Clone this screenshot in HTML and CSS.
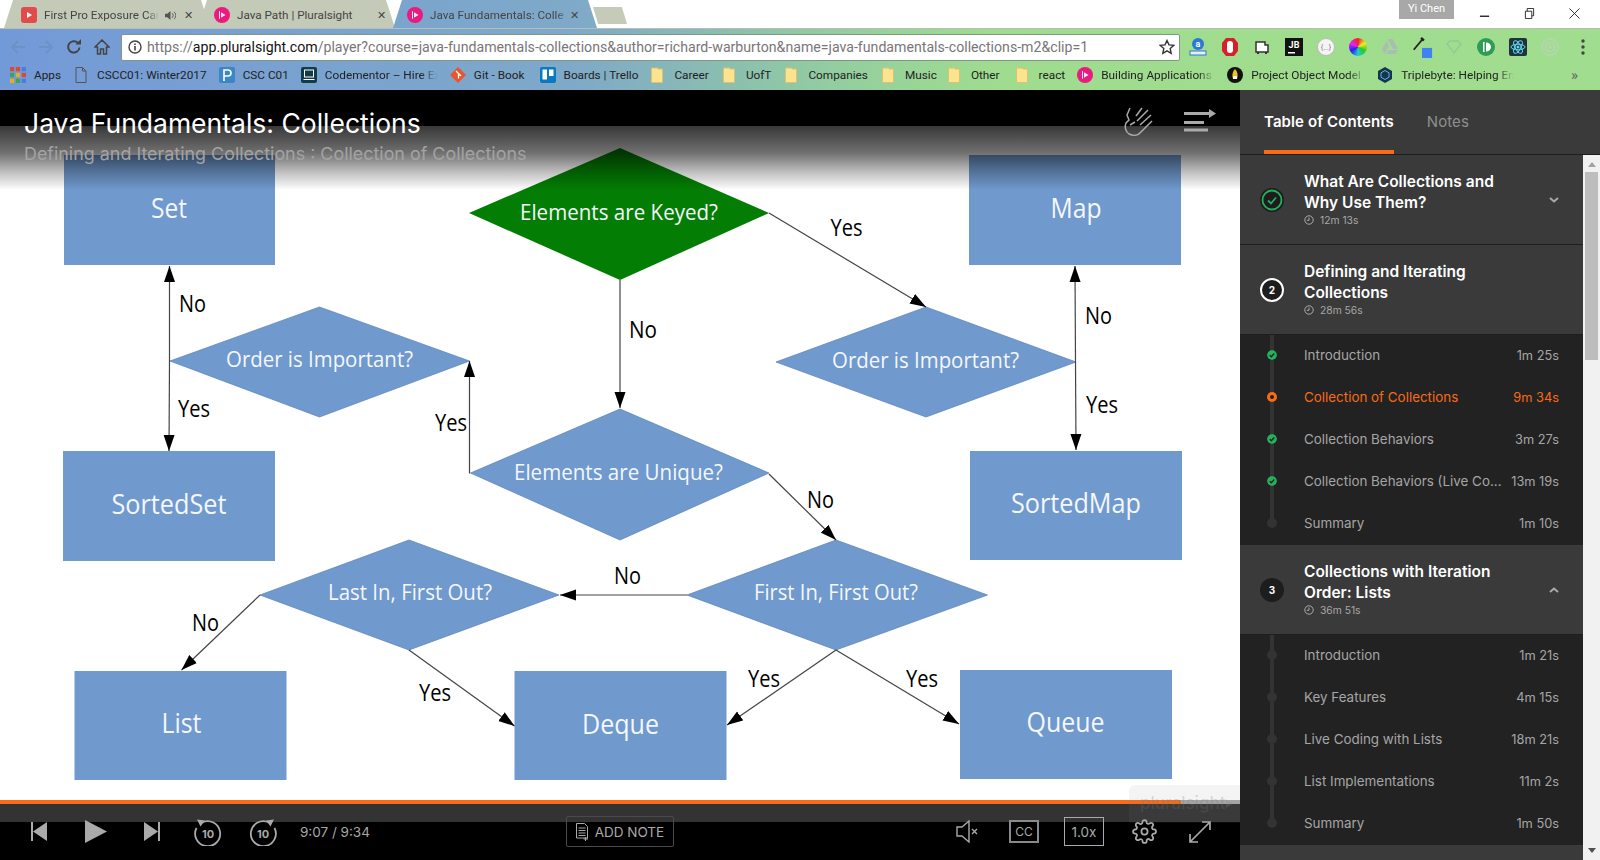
FILE: index.html
```html
<!DOCTYPE html>
<html>
  <head>
    <meta charset="utf-8">
    <link rel="stylesheet" href="styles.css">
    <title>Java Fundamentals: Collections</title>
  </head>
  <body>
    <svg class="defs" width="0" height="0">
      <defs>
        <symbol id="ps" viewBox="0 0 16 16">
          <circle cx="8" cy="8" r="8" fill="#ea1a7f"/>
          <path d="M5 4v8l1-.6V4.600zM7 5.200v5.600l4.500-2.800z" fill="#fff" opacity=".9"/>
        </symbol>
        <symbol id="folder" viewBox="0 0 12 16">
          <path d="M.5 1h6.500v1h4.500v13.500H.5z" fill="#fbe38f" stroke="#d9c36e"/>
        </symbol>
        <symbol id="clock" viewBox="0 0 10 10">
          <circle cx="5" cy="5" r="4.200" fill="none" stroke="#aaa"/>
          <path d="M5 2.500V5.300H2.800" fill="none" stroke="#aaa"/>
        </symbol>
        <symbol id="done" viewBox="0 0 10 10">
          <circle cx="5" cy="5" r="5" fill="#23b15d"/>
          <path d="M2.700 5.200l1.600 1.600 3-3.300" fill="none" stroke="#222" stroke-width="1.300"/>
        </symbol>
        <marker id="head" markerUnits="userSpaceOnUse" markerWidth="17" markerHeight="12" refX="16" refY="6" orient="auto">
          <path d="M0 .5L16 6 0 11.500z" fill="#000"/>
        </marker>
      </defs>
    </svg>

    <div class="browser">
      <div class="tabstrip">
        <div class="tab">
          <svg class="favicon" viewBox="0 0 16 16"><rect width="16" height="16" rx="3" fill="#e34a4a"/><path d="M6 5v6l5-3z" fill="#fff"/></svg>
          <span class="tab-title tab-title-short">First Pro Exposure Car</span>
          <svg class="tab-sound" viewBox="0 0 12 12"><path d="M0 4h2.500L6 1v10L2.500 8H0z" fill="#555"/><path d="M8 3.500a4 4 0 0 1 0 5M10 2a6 6 0 0 1 0 8" fill="none" stroke="#555"/></svg>
          <span class="tab-close">✕</span>
        </div>
        <div class="tab tab-second">
          <svg class="favicon"><use href="#ps"/></svg>
          <span class="tab-title">Java Path | Pluralsight</span>
          <span class="tab-close">✕</span>
        </div>
        <div class="tab tab-active">
          <svg class="favicon"><use href="#ps"/></svg>
          <span class="tab-title tab-title-short">Java Fundamentals: Colle</span>
          <span class="tab-close">✕</span>
        </div>
        <div class="newtab"></div>
        <div class="user">Yi Chen</div>
        <div class="winbtns">
          <svg viewBox="0 0 12 12"><path d="M1 9h10" stroke="#222" stroke-width="1.500"/></svg>
          <svg viewBox="0 0 12 12"><path d="M1.500 3.500h7v8h-7zM3.500 3.500V.5h7v8h-2" fill="none" stroke="#222"/></svg>
          <svg viewBox="0 0 12 12"><path d="M.5.5l11 11M11.500.5l-11 11" stroke="#222"/></svg>
        </div>
      </div>

      <div class="toolbar">
        <svg class="nav nav-off" viewBox="0 0 16 16"><path d="M15 8H2M8 2L2 8l6 6" fill="none" stroke="#6f90c4" stroke-width="2"/></svg>
        <svg class="nav nav-off" viewBox="0 0 16 16"><path d="M1 8h13M8 2l6 6-6 6" fill="none" stroke="#6f90c4" stroke-width="2"/></svg>
        <svg class="nav" viewBox="0 0 16 16"><path d="M13.500 8.500A5.700 5.700 0 1 1 12 4" fill="none" stroke="#444" stroke-width="2"/><path d="M9.500 5.500H15V0z" fill="#444"/></svg>
        <svg class="nav" viewBox="0 0 16 16"><path d="M8 1L1 8h2.500v7h3V10h3v5h3V8H15z" fill="none" stroke="#444" stroke-width="1.500"/></svg>
        <div class="omnibox">
          <svg class="info" viewBox="0 0 14 14"><circle cx="7" cy="7" r="6" fill="none" stroke="#444" stroke-width="1.400"/><path d="M6.200 6h1.600v4.500H6.200zM6.200 3.400h1.600V5H6.200z" fill="#444"/></svg>
          <span class="url"><span class="url-muted">https://</span>app.pluralsight.com<span class="url-muted">/player?course=java-fundamentals-collections&amp;author=richard-warburton&amp;name=java-fundamentals-collections-m2&amp;clip=1</span></span>
          <svg class="star" viewBox="0 0 16 16"><path d="M8 1.500l2 4.400 4.800.5-3.600 3.200 1 4.700L8 11.900l-4.200 2.400 1-4.700L1.200 6.400 6 5.900z" fill="none" stroke="#333" stroke-width="1.400"/></svg>
        </div>
        <div class="extensions">
          <svg viewBox="0 0 18 18"><circle cx="9" cy="6" r="6" fill="#2a78d8"/><text x="9" y="9" class="ext-a">a</text><rect x="1" y="13" width="16" height="4" fill="#e8eef0" stroke="#2a78d8"/></svg>
          <svg viewBox="0 0 18 18"><path d="M5 0h8l4 5v8l-4 5H5l-4-5V5z" fill="#d8202a"/><rect x="6" y="3" width="6" height="12" rx="3" fill="#fff"/></svg>
          <svg viewBox="0 0 18 18"><path d="M3 4h9v3h3v7H3z" fill="#fff" stroke="#333" stroke-width="1.500"/><path d="M5 14v2M13 14v2" stroke="#333" stroke-width="2"/></svg>
          <svg viewBox="0 0 18 18"><rect width="18" height="18" fill="#111"/><text x="9" y="10" class="ext-jb">JB</text><rect x="3" y="14" width="7" height="1.500" fill="#fff"/></svg>
          <svg viewBox="0 0 18 18"><circle cx="9" cy="9" r="8.500" fill="#f4f4f4" stroke="#bbb"/><text x="9" y="12" class="ext-dots">{...}</text></svg>
          <div class="ext-wheel"></div>
          <svg viewBox="0 0 18 18"><path d="M6.500 1h5L17 11h-5zM5.500 3L1 11l2.500 5 4.500-8zM5 16l2.500-4H17l-2.500 4z" fill="#a9bdb0"/></svg>
          <svg class="ext-drop" viewBox="0 0 24 24"><path d="M3 15L13 3" stroke="#222" stroke-width="2"/><path d="M12 1l3 3-2 2-3-3z" fill="#222"/><rect x="12" y="13" width="11" height="11" fill="#3f82f0"/></svg>
          <svg viewBox="0 0 18 18"><path d="M2 6l3-3h8l3 3-7 9z" fill="none" stroke="#93c996" stroke-width="1.300"/></svg>
          <svg viewBox="0 0 18 18"><circle cx="9" cy="9" r="9" fill="#2f9c55"/><path d="M6 4h1.500v10H6zM9 4.500a5 4.500 0 0 1 0 9z" fill="#fff"/></svg>
          <svg viewBox="0 0 18 18"><rect width="18" height="18" rx="2" fill="#20323a"/><g fill="none" stroke="#61d5f5"><ellipse cx="9" cy="9" rx="7" ry="2.800"/><ellipse cx="9" cy="9" rx="7" ry="2.800" transform="rotate(60 9 9)"/><ellipse cx="9" cy="9" rx="7" ry="2.800" transform="rotate(120 9 9)"/></g><circle cx="9" cy="9" r="1.500" fill="#61d5f5"/></svg>
          <svg viewBox="0 0 18 18"><g fill="none" stroke="#b9d4b4" stroke-width="1.500"><circle cx="9" cy="9" r="8"/><circle cx="9" cy="9" r="4.500"/></g><circle cx="9" cy="9" r="1.500" fill="#b9d4b4"/></svg>
          <svg class="ext-menu" viewBox="0 0 4 16"><circle cx="2" cy="2" r="1.700" fill="#444"/><circle cx="2" cy="8" r="1.700" fill="#444"/><circle cx="2" cy="14" r="1.700" fill="#444"/></svg>
        </div>
      </div>

      <div class="bookmarks">
        <div class="bm bm-apps">
          <svg class="bm-icon" viewBox="0 0 15 15"><g fill="#d84a38"><rect width="4" height="4"/><rect x="5.500" width="4" height="4"/></g><rect x="11" width="4" height="4" fill="#4a7de0"/><rect y="5.500" width="4" height="4" fill="#3aa655"/><rect x="5.500" y="5.500" width="4" height="4" fill="#e0b020"/><rect x="11" y="5.500" width="4" height="4" fill="#d84a38"/><rect y="11" width="4" height="4" fill="#e0b020"/><rect x="5.500" y="11" width="4" height="4" fill="#3aa655"/><rect x="11" y="11" width="4" height="4" fill="#4a7de0"/></svg>
          <span>Apps</span>
        </div>
        <div class="bm bm-doc">
          <svg class="bm-icon" viewBox="0 0 12 16"><path d="M1 .5h6.500L11 4v11.500H1z" fill="none" stroke="#555"/><path d="M7.500.5V4H11" fill="none" stroke="#555"/></svg>
          <span>CSCC01: Winter2017</span>
        </div>
        <div class="bm bm-csc">
          <svg class="bm-icon" viewBox="0 0 16 16"><rect width="16" height="16" rx="2" fill="#3b86c6"/><path d="M5 14V3h4a3 3 0 0 1 0 6H5" fill="none" stroke="#fff" stroke-width="1.600"/></svg>
          <span>CSC C01</span>
        </div>
        <div class="bm bm-code">
          <svg class="bm-icon" viewBox="0 0 16 16"><rect width="16" height="16" rx="2" fill="#123b4a"/><rect x="3.500" y="3" width="9" height="7" fill="none" stroke="#fff"/><path d="M2.500 12.500h11" stroke="#fff"/></svg>
          <span class="bm-fade">Codementor – Hire Ex</span>
        </div>
        <div class="bm bm-git">
          <svg class="bm-icon" viewBox="0 0 16 16"><path d="M8 0l8 8-8 8-8-8z" fill="#e8552d"/><path d="M6 4l2.500 2.500v5M8.500 6.500l2.500 2.500" stroke="#fff" stroke-width="1.300" fill="none"/></svg>
          <span>Git - Book</span>
        </div>
        <div class="bm bm-trello">
          <svg class="bm-icon" viewBox="0 0 16 16"><rect width="16" height="16" rx="2" fill="#0a79bf"/><rect x="2.500" y="2.500" width="4.500" height="10" fill="#fff"/><rect x="9" y="2.500" width="4.500" height="6.500" fill="#fff"/></svg>
          <span>Boards | Trello</span>
        </div>
        <div class="bm bm-folder"><svg class="bm-icon bm-folder-icon"><use href="#folder"/></svg><span>Career</span></div>
        <div class="bm bm-folder"><svg class="bm-icon bm-folder-icon"><use href="#folder"/></svg><span>UofT</span></div>
        <div class="bm bm-folder"><svg class="bm-icon bm-folder-icon"><use href="#folder"/></svg><span>Companies</span></div>
        <div class="bm bm-folder bm-music"><svg class="bm-icon bm-folder-icon"><use href="#folder"/></svg><span>Music</span></div>
        <div class="bm bm-folder bm-other"><svg class="bm-icon bm-folder-icon"><use href="#folder"/></svg><span>Other</span></div>
        <div class="bm bm-folder bm-react"><svg class="bm-icon bm-folder-icon"><use href="#folder"/></svg><span>react</span></div>
        <div class="bm bm-ps">
          <svg class="bm-icon"><use href="#ps"/></svg>
          <span class="bm-fade">Building Applications</span>
        </div>
        <div class="bm bm-maven">
          <svg class="bm-icon" viewBox="0 0 16 16"><circle cx="8" cy="8" r="8" fill="#111"/><path d="M8 2c3 3 3 7 2 10H6C5 9 5 5 8 2z" fill="#f2c21a"/><path d="M6 9h4v3H6z" fill="#fff"/></svg>
          <span class="bm-fade">Project Object Model</span>
        </div>
        <div class="bm bm-triple">
          <svg class="bm-icon" viewBox="0 0 16 16"><path d="M8 0l7 4v8l-7 4-7-4V4z" fill="#163450"/><path d="M8 3.500l4 2.300v4.400l-4 2.300-4-2.300V5.800z" fill="none" stroke="#5fb5d8"/></svg>
          <span class="bm-fade">Triplebyte: Helping En</span>
        </div>
        <div class="bm-more">»</div>
      </div>
    </div>

    <div class="app">
      <div class="player">
        <div class="player-top"></div>
        <div class="video">
          <svg class="slide" viewBox="0 126 1240 674" width="1240" height="674">
            <g class="boxes">
              <rect x="64" y="155" width="211" height="110"/>
              <rect x="969" y="155" width="212" height="110"/>
              <rect x="63" y="451" width="212" height="110"/>
              <rect x="970" y="451" width="212" height="109"/>
              <rect x="74.500" y="671" width="212" height="109"/>
              <rect x="514.500" y="671" width="212" height="109"/>
              <rect x="960" y="670" width="212" height="109"/>
            </g>
            <polygon class="keyed" points="469,213 620,148 769,213 620,280"/>
            <g class="boxes diamonds">
              <polygon points="170,361 319.500,307 469.500,361 319.500,417"/>
              <polygon points="776,362 926,307 1076,362 926,417"/>
              <polygon points="470.500,473 620,409 769,473 620,540"/>
              <polygon points="260,595 409,540 559,595 409,650"/>
              <polygon points="687,595 836,540 987.500,595 836,650"/>
            </g>

            <g class="arrows">
              <line x1="169.500" y1="361" x2="169.500" y2="266" marker-end="url(#head)"/>
              <line x1="169.500" y1="361" x2="169" y2="451" marker-end="url(#head)"/>
              <path d="M470 473H469.500V361" marker-end="url(#head)"/>
              <line x1="620" y1="280" x2="620" y2="408" marker-end="url(#head)"/>
              <line x1="769" y1="213" x2="926" y2="307" marker-end="url(#head)"/>
              <line x1="1075.500" y1="362" x2="1075" y2="266" marker-end="url(#head)"/>
              <line x1="1075.500" y1="362" x2="1076" y2="450" marker-end="url(#head)"/>
              <line x1="769" y1="474" x2="836" y2="540" marker-end="url(#head)"/>
              <line x1="687" y1="595" x2="560" y2="595" marker-end="url(#head)"/>
              <line x1="260" y1="595" x2="181.500" y2="670" marker-end="url(#head)"/>
              <line x1="409" y1="650" x2="514.500" y2="726" marker-end="url(#head)"/>
              <line x1="836" y1="650" x2="727" y2="725" marker-end="url(#head)"/>
              <line x1="836" y1="650" x2="959" y2="724" marker-end="url(#head)"/>
            </g>

            <g class="box-text">
              <text x="151" y="218" textLength="36" lengthAdjust="spacingAndGlyphs">Set</text>
              <text x="1050.500" y="218" textLength="51" lengthAdjust="spacingAndGlyphs">Map</text>
              <text x="111.500" y="514" textLength="115" lengthAdjust="spacingAndGlyphs">SortedSet</text>
              <text x="1011" y="513" textLength="130" lengthAdjust="spacingAndGlyphs">SortedMap</text>
              <text x="161.500" y="733" textLength="40" lengthAdjust="spacingAndGlyphs">List</text>
              <text x="582" y="734" textLength="77" lengthAdjust="spacingAndGlyphs">Deque</text>
              <text x="1026.500" y="732" textLength="78" lengthAdjust="spacingAndGlyphs">Queue</text>
            </g>
            <g class="diamond-text">
              <text x="520" y="220" textLength="198" lengthAdjust="spacingAndGlyphs">Elements are Keyed?</text>
              <text x="226" y="367" textLength="187" lengthAdjust="spacingAndGlyphs">Order is Important?</text>
              <text x="832" y="368" textLength="187" lengthAdjust="spacingAndGlyphs">Order is Important?</text>
              <text x="514" y="480" textLength="209" lengthAdjust="spacingAndGlyphs">Elements are Unique?</text>
              <text x="328" y="600" textLength="164" lengthAdjust="spacingAndGlyphs">Last In, First Out?</text>
              <text x="754" y="600" textLength="164" lengthAdjust="spacingAndGlyphs">First In, First Out?</text>
            </g>
            <g class="edge-text">
              <text x="179" y="312" textLength="27" lengthAdjust="spacingAndGlyphs">No</text>
              <text x="178" y="417" textLength="32" lengthAdjust="spacingAndGlyphs">Yes</text>
              <text x="435" y="431" textLength="32" lengthAdjust="spacingAndGlyphs">Yes</text>
              <text x="629" y="338" textLength="28" lengthAdjust="spacingAndGlyphs">No</text>
              <text x="830.500" y="236" textLength="32" lengthAdjust="spacingAndGlyphs">Yes</text>
              <text x="1085" y="324" textLength="27" lengthAdjust="spacingAndGlyphs">No</text>
              <text x="1086" y="413" textLength="32" lengthAdjust="spacingAndGlyphs">Yes</text>
              <text x="807" y="508" textLength="27" lengthAdjust="spacingAndGlyphs">No</text>
              <text x="614" y="584" textLength="27" lengthAdjust="spacingAndGlyphs">No</text>
              <text x="192" y="631" textLength="27" lengthAdjust="spacingAndGlyphs">No</text>
              <text x="419" y="701" textLength="32" lengthAdjust="spacingAndGlyphs">Yes</text>
              <text x="748" y="687" textLength="32" lengthAdjust="spacingAndGlyphs">Yes</text>
              <text x="906" y="687" textLength="32" lengthAdjust="spacingAndGlyphs">Yes</text>
            </g>
          </svg>
          <div class="video-shade"></div>
        </div>

        <div class="player-head">
          <div>
            <h1 class="course-title">Java Fundamentals: Collections</h1>
            <div class="course-sub">Defining and Iterating Collections : Collection of Collections</div>
          </div>
          <div class="head-icons">
            <svg class="wave" viewBox="0 0 30 30"><path d="M7 1L4 8l2 5-3 3c-2 4 0 9 3 11 4 2 9 2 12-2L29 14M13 9l6-8M14 14L25 3M17 18L28 8M12 15l-5 3" fill="none" stroke="#aaa" stroke-width="1.500"/></svg>
            <svg class="panel-toggle" viewBox="0 0 32 23"><path d="M0 4.500h26M0 13.500h20M0 21h24" stroke="#aaa" stroke-width="3"/><path d="M25 0l7 4.500-7 4.500z" fill="#aaa"/></svg>
          </div>
        </div>

        <div class="watermark">
          <span>pluralsight</span>
          <svg viewBox="0 0 8 10"><path d="M0 0l8 5-8 5z" fill="#8a8a8a" opacity=".25"/></svg>
        </div>

        <div class="progress"><div class="progress-fill"></div></div>
        <div class="controls">
          <svg class="ctl ctl-prev" viewBox="0 0 16 19"><path d="M0 0h2v19H0zM16 0L2 9.500 16 19z" fill="#aaa"/></svg>
          <svg class="ctl ctl-play" viewBox="0 0 22 23"><path d="M0 0l22 11.500L0 23z" fill="#aaa"/></svg>
          <svg class="ctl ctl-next" viewBox="0 0 16 19"><path d="M0 0l14 9.500L0 19zM14 0h2v19h-2z" fill="#aaa"/></svg>
          <svg class="ctl ctl-skip ctl-back" viewBox="0 0 28 28">
            <path d="M8 4.500A12.500 12.500 0 1 1 2.500 10" fill="none" stroke="#aaa" stroke-width="1.800"/>
            <path d="M3 1.500l8 1-4.500 6z" fill="#aaa"/>
            <text x="14" y="20" class="skip-num">10</text>
          </svg>
          <svg class="ctl ctl-skip ctl-fwd" viewBox="0 0 28 28">
            <path d="M20 4.500A12.500 12.500 0 1 0 25.500 10" fill="none" stroke="#aaa" stroke-width="1.800"/>
            <path d="M25 1.500l-8 1 4.500 6z" fill="#aaa"/>
            <text x="14" y="20" class="skip-num">10</text>
          </svg>
          <span class="time">9:07 / 9:34</span>
          <div class="add-note">
            <svg viewBox="0 0 13 18"><path d="M.5.5h8l3 3V15H.5z" fill="none" stroke="#aaa"/><path d="M2.500 5h7M2.500 7.500h7M2.500 10h7M2.500 12.500h7" stroke="#aaa"/><path d="M9.500 14v4M7.500 16h4.500" stroke="#aaa"/></svg>
            <span>ADD NOTE</span>
          </div>
          <svg class="ctl ctl-mute" viewBox="0 0 22 23"><path d="M1 7h5l7-6v21l-7-6H1z" fill="none" stroke="#aaa" stroke-width="1.400"/><path d="M16 9l5 5M21 9l-5 5" stroke="#aaa" stroke-width="1.400"/></svg>
          <div class="ctl-box ctl-cc">CC</div>
          <div class="ctl-box ctl-speed">1.0x</div>
          <svg class="ctl ctl-gear" viewBox="0 0 24 24"><circle cx="12" cy="12" r="3" fill="none" stroke="#aaa" stroke-width="1.700"/><path d="M19.400 15a1.650 1.650 0 0 0 .33 1.820l.06.06a2 2 0 0 1 0 2.830 2 2 0 0 1-2.830 0l-.06-.06a1.650 1.650 0 0 0-1.820-.33 1.650 1.650 0 0 0-1 1.510V21a2 2 0 0 1-2 2 2 2 0 0 1-2-2v-.09A1.650 1.650 0 0 0 9 19.400a1.650 1.650 0 0 0-1.820.33l-.06.06a2 2 0 0 1-2.830 0 2 2 0 0 1 0-2.830l.06-.06a1.650 1.650 0 0 0 .33-1.820 1.650 1.650 0 0 0-1.510-1H3a2 2 0 0 1-2-2 2 2 0 0 1 2-2h.09A1.650 1.650 0 0 0 4.600 9a1.650 1.650 0 0 0-.33-1.820l-.06-.06a2 2 0 0 1 0-2.830 2 2 0 0 1 2.830 0l.06.06a1.650 1.650 0 0 0 1.820.33H9a1.650 1.650 0 0 0 1-1.510V3a2 2 0 0 1 2-2 2 2 0 0 1 2 2v.09a1.650 1.650 0 0 0 1 1.510 1.650 1.650 0 0 0 1.820-.33l.06-.06a2 2 0 0 1 2.830 0 2 2 0 0 1 0 2.830l-.06.06a1.650 1.650 0 0 0-.33 1.820V9a1.650 1.650 0 0 0 1.510 1H21a2 2 0 0 1 2 2 2 2 0 0 1-2 2h-.09a1.650 1.650 0 0 0-1.510 1z" fill="none" stroke="#aaa" stroke-width="1.700"/></svg>
          <svg class="ctl ctl-expand" viewBox="0 0 22 22"><path d="M1 21L21 1M13 1h8v8M1 13v8h8" fill="none" stroke="#aaa" stroke-width="1.700"/></svg>
        </div>
      </div>

      <div class="sidebar">
        <div class="side-tabs">
          <div class="side-tab side-tab-on">Table of Contents</div>
          <div class="side-tab">Notes</div>
        </div>
        <div class="side-body">
          <div class="toc">
            <div class="module">
              <svg class="mod-badge" viewBox="0 0 24 24"><circle cx="12" cy="12" r="12" fill="#1d1d1d"/><circle cx="12" cy="12" r="9.500" fill="none" stroke="#23b15d" stroke-width="1.800"/><path d="M8 12.500l3 3 5-6" fill="none" stroke="#23b15d" stroke-width="1.800"/></svg>
              <div class="mod-text">
                <div class="mod-title">What Are Collections and Why Use Them?</div>
                <div class="mod-time"><svg><use href="#clock"/></svg>12m 13s</div>
              </div>
              <svg class="mod-chevron" viewBox="0 0 10 6"><path d="M1 1l4 3.500L9 1" fill="none" stroke="#aaa" stroke-width="2"/></svg>
            </div>

            <div class="module">
              <div class="mod-num mod-num-current">2</div>
              <div class="mod-text">
                <div class="mod-title">Defining and Iterating Collections</div>
                <div class="mod-time"><svg><use href="#clock"/></svg>28m 56s</div>
              </div>
            </div>
            <div class="clips">
              <div class="clip"><svg class="clip-dot"><use href="#done"/></svg><span class="clip-name">Introduction</span><span class="clip-time">1m 25s</span></div>
              <div class="clip clip-now"><span class="clip-dot clip-dot-now"></span><span class="clip-name">Collection of Collections</span><span class="clip-time">9m 34s</span></div>
              <div class="clip"><svg class="clip-dot"><use href="#done"/></svg><span class="clip-name">Collection Behaviors</span><span class="clip-time">3m 27s</span></div>
              <div class="clip"><svg class="clip-dot"><use href="#done"/></svg><span class="clip-name">Collection Behaviors (Live Co...</span><span class="clip-time">13m 19s</span></div>
              <div class="clip"><span class="clip-dot clip-dot-todo"></span><span class="clip-name">Summary</span><span class="clip-time">1m 10s</span></div>
            </div>

            <div class="module">
              <div class="mod-num">3</div>
              <div class="mod-text">
                <div class="mod-title">Collections with Iteration Order: Lists</div>
                <div class="mod-time"><svg><use href="#clock"/></svg>36m 51s</div>
              </div>
              <svg class="mod-chevron" viewBox="0 0 10 6"><path d="M1 5l4-3.500L9 5" fill="none" stroke="#aaa" stroke-width="2"/></svg>
            </div>
            <div class="clips">
              <div class="clip"><span class="clip-dot clip-dot-todo"></span><span class="clip-name">Introduction</span><span class="clip-time">1m 21s</span></div>
              <div class="clip"><span class="clip-dot clip-dot-todo"></span><span class="clip-name">Key Features</span><span class="clip-time">4m 15s</span></div>
              <div class="clip"><span class="clip-dot clip-dot-todo"></span><span class="clip-name">Live Coding with Lists</span><span class="clip-time">18m 21s</span></div>
              <div class="clip"><span class="clip-dot clip-dot-todo"></span><span class="clip-name">List Implementations</span><span class="clip-time">11m 2s</span></div>
              <div class="clip"><span class="clip-dot clip-dot-todo"></span><span class="clip-name">Summary</span><span class="clip-time">1m 50s</span></div>
            </div>
          </div>
          <div class="scrollbar">
            <div class="scroll-up"></div>
            <div class="scroll-track"><div class="scroll-thumb"></div></div>
            <div class="scroll-down"></div>
          </div>
        </div>
      </div>
    </div>
  </body>
</html>
```
FILE: styles.css
```css
/* Page frame: browser chrome on top, player and contents panel below */
html, body {
    margin: 0;
    padding: 0;
    height: 860px;
    overflow: hidden;
    background: #000;
    font-family: "Inter", "Liberation Sans", sans-serif;
}

.defs {
    position: absolute;
}

/* Browser chrome */
.browser {
    height: 90px;
    font-family: "Roboto", "Liberation Sans", sans-serif;
    --theme: linear-gradient(90deg, #739ad8 0%, #7fa9c8 36%, #93cda0 52%, #9fdc8f 62%, #a0dd8e 100%);
}

.tabstrip {
    height: 28px;
    background: #fff;
    display: flex;
    align-items: flex-end;
    padding-left: 4px;
    position: relative;
    border-bottom: 1px solid #b9bdb5;
}

.tab {
    width: 206px;
    height: 28px;
    margin-right: -12px;
    padding: 2px 17px 0 13px;
    box-sizing: border-box;
    display: flex;
    align-items: center;
    background: #c4cab8;
    clip-path: polygon(0 100%, 9px 0, calc(100% - 9px) 0, 100% 100%);
    font-size: 11.700px;
    color: #444;
}

.tab-second {
    width: 197px;
    margin-right: -2px;
    padding: 2px 9px 0 12px;
}

.tab-active {
    width: 204px;
    margin-right: -4px;
    padding: 2px 18px 0 10px;
    background: var(--theme);
    background-attachment: fixed;
    z-index: 1;
}

.favicon {
    width: 16px;
    height: 16px;
    margin: 0 7px 0 4px;
    flex: none;
}

.tab-title {
    flex: 1;
    white-space: nowrap;
    overflow: hidden;
}

.tab-title-short {
    -webkit-mask-image: linear-gradient(90deg, #000 90%, transparent);
    mask-image: linear-gradient(90deg, #000 90%, transparent);
}

.tab-sound {
    width: 11px;
    height: 11px;
    margin: 0 8px 0 6px;
}

.tab-close {
    font-size: 11px;
    color: #444;
}

.newtab {
    width: 34px;
    height: 17px;
    margin: 0 0 4px 0;
    background: #c5cbb8;
    clip-path: polygon(0 0, 85% 0, 100% 100%, 15% 100%);
}

.user {
    position: absolute;
    left: 1399px;
    top: 0;
    width: 55px;
    height: 19px;
    line-height: 18px;
    background: #a8a8a8;
    color: #fff;
    font-size: 11px;
    text-align: center;
}

.winbtns {
    position: absolute;
    left: 1479px;
    top: 8px;
    display: flex;
    gap: 34px;
}

.winbtns svg {
    width: 11px;
    height: 11px;
}

.toolbar {
    height: 36px;
    display: flex;
    align-items: center;
    background: var(--theme);
    background-attachment: fixed;
    padding-left: 10px;
}

.nav {
    width: 16px;
    height: 16px;
    margin-right: 12px;
    flex: none;
}

.nav-off {
    opacity: .9;
}

.omnibox {
    width: 1059px;
    height: 27px;
    margin-left: -1px;
    box-sizing: border-box;
    background: #fff;
    border: 1px solid #7d9a80;
    border-radius: 2px;
    display: flex;
    align-items: center;
    padding: 0 4px 0 6px;
    font-size: 14.150px;
    white-space: nowrap;
}

.info {
    width: 14px;
    height: 14px;
    margin-right: 5px;
    flex: none;
}

.url {
    flex: 1;
    color: #111;
}

.url-muted {
    color: #777;
}

.star {
    width: 16px;
    height: 16px;
}

.extensions {
    display: flex;
    align-items: center;
    gap: 14px;
    margin-left: 9px;
}

.extensions svg, .ext-wheel {
    width: 18px;
    height: 18px;
    flex: none;
}

.ext-wheel {
    border-radius: 50%;
    background: conic-gradient(#e22, #ee2 17%, #2c2 33%, #2cc 50%, #22e 67%, #e2e 83%, #e22);
}

.extensions .ext-drop {
    width: 22px;
    height: 22px;
    margin: 0 -2px;
}

.extensions .ext-menu {
    width: 4px;
    height: 16px;
    margin-left: 8px;
}

.ext-a {
    font-size: 9px;
    font-weight: bold;
    fill: #fff;
    text-anchor: middle;
}

.ext-jb {
    font-size: 9px;
    font-weight: bold;
    fill: #fff;
    text-anchor: middle;
}

.ext-dots {
    font-size: 7px;
    fill: #777;
    text-anchor: middle;
}

.bookmarks {
    height: 25px;
    box-sizing: border-box;
    padding: 0 0 5px 10px;
    display: flex;
    align-items: center;
    background: var(--theme);
    background-attachment: fixed;
    font-size: 11.800px;
    color: #222;
    white-space: nowrap;
    position: relative;
}

.bm {
    display: flex;
    align-items: center;
    gap: 8px;
    margin-right: 12px;
}

.bm-git {
    margin-right: 15px;
}

.bm-trello {
    margin-right: 13px;
}

.bm-icon {
    width: 16px;
    height: 16px;
    flex: none;
}

.bm-folder-icon {
    width: 12px;
}

.bm-folder {
    gap: 11px;
    margin-right: 14px;
}

.bm-folder.bm-music {
    margin-right: 11px;
}

.bm-folder.bm-other {
    margin-right: 16px;
}

.bm-folder.bm-react {
    margin-right: 12px;
}

.bm-fade {
    display: block;
    overflow: hidden;
    -webkit-mask-image: linear-gradient(90deg, #000 85%, transparent);
    mask-image: linear-gradient(90deg, #000 85%, transparent);
}

.bm-code .bm-fade {
    width: 113px;
}

.bm-ps .bm-fade {
    width: 114px;
}

.bm-maven .bm-fade {
    width: 114px;
}

.bm-triple .bm-fade {
    width: 113px;
}

.bm-more {
    margin-left: auto;
    margin-right: 22px;
    font-size: 15px;
    color: #666;
}

/* Player */
.app {
    display: flex;
    height: 770px;
}

.player {
    width: 1240px;
    display: flex;
    flex-direction: column;
    position: relative;
    background: #000;
}

.player-top {
    height: 36px;
}

.video {
    height: 674px;
    background: #fff;
    position: relative;
}

.slide {
    display: block;
    font-family: "Open Sans", "Liberation Sans", sans-serif;
}

.boxes {
    fill: #7099cd;
}

.diamonds {
    stroke: #5f88bd;
    stroke-width: .8;
}

.keyed {
    fill: #037d03;
}

.arrows {
    stroke: #444;
    stroke-width: 1.200;
    fill: none;
}

.box-text {
    fill: #f4f7fb;
    font-size: 28px;
}

.diamond-text {
    fill: #f4f7fb;
    font-size: 22px;
}

.edge-text {
    fill: #000;
    font-size: 23px;
}

.video-shade {
    position: absolute;
    left: 0;
    right: 0;
    top: 0;
    height: 64px;
    background: linear-gradient(rgba(0, 0, 0, .78), rgba(0, 0, 0, .56) 42%, rgba(0, 0, 0, .25) 72%, rgba(0, 0, 0, 0));
}

.player-head {
    position: absolute;
    left: 24px;
    right: 24px;
    top: 17px;
    display: flex;
    justify-content: space-between;
}

.course-title {
    margin: 0;
    font-size: 26.500px;
    font-weight: 400;
    line-height: 32px;
    color: #fff;
}

.course-sub {
    margin-top: 3px;
    font-size: 17.900px;
    line-height: 24px;
    color: #a3a3a3;
}

.head-icons {
    display: flex;
    gap: 31px;
    align-items: flex-start;
}

.wave {
    width: 30px;
    height: 30px;
}

.panel-toggle {
    width: 32px;
    height: 23px;
    margin-top: 2px;
}

.watermark {
    position: absolute;
    left: 1129px;
    top: 695px;
    width: 111px;
    height: 38px;
    padding-left: 11px;
    box-sizing: border-box;
    border-radius: 6px 0 0 0;
    background: rgba(128, 128, 128, .09);
    display: flex;
    align-items: flex-start;
    gap: 1px;
    font-size: 17px;
    line-height: 36px;
    font-weight: 500;
    color: rgba(120, 120, 120, .25);
    z-index: 2;
}

.watermark svg {
    width: 7px;
    height: 9px;
    margin-top: 14px;
}

.progress {
    height: 4px;
    background: #a9a9a9;
}

.progress-fill {
    width: 1181px;
    height: 100%;
    background: #f96b16;
}

.controls {
    height: 56px;
    box-sizing: border-box;
    display: flex;
    align-items: center;
    background: linear-gradient(#333 18px, #000 18px);
    padding: 0 0 1px 31px;
    color: #aaa;
}

.ctl {
    flex: none;
}

.ctl-prev, .ctl-next {
    width: 16px;
    height: 19px;
}

.ctl-play {
    width: 22px;
    height: 23px;
    margin-left: 38px;
}

.ctl-next {
    margin-left: 37px;
}

.ctl-skip {
    width: 28px;
    height: 28px;
}

.ctl-back {
    margin-left: 34px;
}

.ctl-fwd {
    margin-left: 27px;
}

.skip-num {
    font-size: 11px;
    font-weight: 700;
    fill: #aaa;
    text-anchor: middle;
}

.time {
    margin-left: 23px;
    font-size: 13.500px;
    color: #a8a8a8;
}

.add-note {
    width: 108px;
    height: 31px;
    margin-left: 196px;
    box-sizing: border-box;
    border: 1px solid #4a4a4a;
    border-radius: 2px;
    display: flex;
    align-items: center;
    justify-content: center;
    gap: 6px;
    font-size: 13.500px;
}

.add-note svg {
    width: 13px;
    height: 18px;
}

.ctl-mute {
    width: 22px;
    height: 23px;
    margin-left: 282px;
}

.ctl-box {
    box-sizing: border-box;
    border: 2px solid #8a8a8a;
    display: flex;
    align-items: center;
    justify-content: center;
    flex: none;
}

.ctl-cc {
    width: 30px;
    height: 23px;
    margin-left: 31px;
    font-size: 12px;
}

.ctl-speed {
    width: 40px;
    height: 29px;
    margin-left: 25px;
    border-width: 1px;
    border-color: #aaa;
    font-size: 13.500px;
}

.ctl-gear {
    width: 25px;
    height: 25px;
    margin-left: 28px;
}

.ctl-expand {
    width: 22px;
    height: 22px;
    margin-left: 32px;
}

/* Table of contents */
.sidebar {
    width: 360px;
    background: #3a3a3a;
    display: flex;
    flex-direction: column;
    color: #fff;
}

.side-tabs {
    height: 65px;
    box-sizing: border-box;
    border-bottom: 1px solid #1e1e1e;
    display: flex;
    gap: 33px;
    padding-left: 24px;
}

.side-tab {
    height: 64px;
    box-sizing: border-box;
    padding-top: 22px;
    font-size: 15px;
    letter-spacing: .1px;
    line-height: 20px;
    color: #8f8f8f;
}

.side-tab-on {
    color: #fff;
    font-weight: 600;
    border-bottom: 4px solid #f96b16;
}

.side-body {
    display: flex;
    height: 705px;
    overflow: hidden;
}

.toc {
    width: 343px;
    background: #3a3a3a;
}

.module {
    height: 90px;
    box-sizing: border-box;
    border-bottom: 1px solid #1e1e1e;
    display: flex;
    align-items: center;
    padding-left: 20px;
    position: relative;
}

.mod-badge, .mod-num {
    width: 24px;
    height: 24px;
    flex: none;
}

.mod-num {
    box-sizing: border-box;
    border-radius: 50%;
    background: #1d1d1d;
    font-size: 10px;
    font-weight: 700;
    line-height: 24px;
    text-align: center;
}

.mod-num-current {
    border: 2px solid #fff;
    line-height: 20px;
}

.mod-text {
    width: 215px;
    margin-left: 20px;
    padding-bottom: 2px;
}

.mod-title {
    font-size: 15.500px;
    font-weight: 600;
    line-height: 21px;
}

.mod-time {
    display: flex;
    align-items: center;
    gap: 6px;
    font-size: 10.300px;
    line-height: 14px;
    color: #a8a8a8;
}

.mod-time svg {
    width: 10px;
    height: 10px;
}

.mod-chevron {
    position: absolute;
    left: 309px;
    top: 42px;
    width: 10px;
    height: 6px;
}

.clips {
    height: 210px;
    background: #222;
    position: relative;
}

/* the vertical line that ties the clip dots together */
.clips::before {
    content: "";
    position: absolute;
    left: 30px;
    top: 0;
    bottom: 21px;
    width: 4px;
    background: #333;
}

.clip {
    height: 42px;
    box-sizing: border-box;
    display: flex;
    align-items: center;
    padding: 0 24px 2px 0;
    position: relative;
    font-size: 13.400px;
    color: #a6a6a6;
}

.clip-now {
    color: #f96b16;
}

.clip-dot {
    width: 10px;
    height: 10px;
    margin: 0 27px 0 27px;
    border-radius: 50%;
    flex: none;
    position: relative;
}

.clip-dot-todo {
    background: #333;
}

.clip-dot-now {
    background: #f96b16;
}

.clip-dot-now::after {
    content: "";
    position: absolute;
    left: 3px;
    top: 3px;
    width: 4px;
    height: 4px;
    border-radius: 50%;
    background: #222;
}

.clip-name {
    flex: 1;
    white-space: nowrap;
}

.clip-time {
    font-size: 12.800px;
}

.scrollbar {
    width: 17px;
    background: #f1f1f1;
    display: flex;
    flex-direction: column;
    align-items: center;
}

.scroll-up, .scroll-down {
    width: 0;
    height: 0;
    border: 4px solid transparent;
    flex: none;
}

.scroll-up {
    border-top: 0;
    border-bottom: 5px solid #a3a3a3;
    margin: 7px 0 5px;
}

.scroll-track {
    flex: 1;
    align-self: stretch;
    padding: 0 2px;
}

.scroll-thumb {
    height: 188px;
    background: #bdbdbd;
}

.scroll-down {
    border-bottom: 0;
    border-top: 5px solid #505050;
    margin: 5px 0 7px;
}
```
